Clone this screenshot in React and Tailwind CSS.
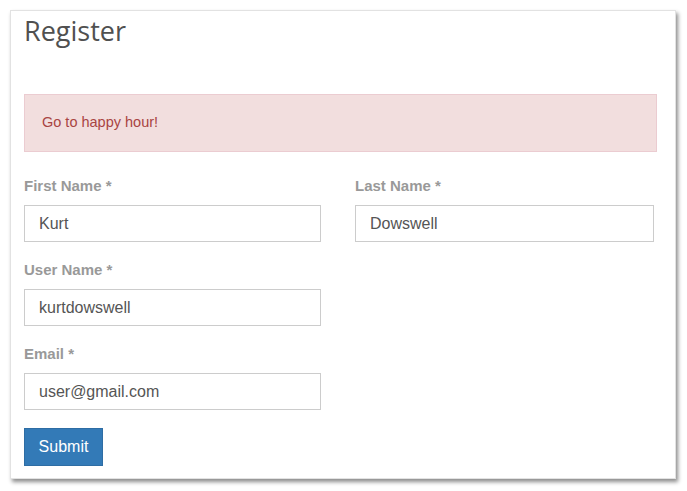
export default function App() {
  const label = "block h-5 text-[15px] leading-5 font-bold text-[#999] mb-[9px]";
  const input =
    "block w-full h-[37px] border border-[#ccc] bg-white px-[14px] text-[16px] text-[#555] outline-none";

  return (
    <div className="min-h-screen bg-white p-[10px] font-['Liberation_Sans',Arial,sans-serif]">
      <div className="w-[666px] h-[469px] bg-white border border-[#e2e2e2] shadow-[2px_3px_4px_rgba(0,0,0,0.45)] px-[13px]">
        <h1 className="mt-[1px] font-['Open_Sans',sans-serif] text-[27px] leading-[37px] text-[#505050] font-normal">
          Register
        </h1>

        <div className="mt-[45px] w-[633px] h-[58px] flex items-center bg-[#f2dede] border border-[#ebccd1] px-[17px] text-[14.5px] text-[#a94442]">
          Go to happy hour!
        </div>

        <form className="mt-[24px] grid grid-cols-[297px_299px] gap-x-[34px]">
          <div>
            <label className={label}>First Name *</label>
            <input className={input} defaultValue="Kurt" />
          </div>
          <div>
            <label className={label}>Last Name *</label>
            <input className={input} defaultValue="Dowswell" />
          </div>
          <div className="mt-[18px]">
            <label className={label}>User Name *</label>
            <input className={input} defaultValue="kurtdowswell" />
          </div>
          <div />
          <div className="mt-[18px]">
            <label className={label}>Email *</label>
            <input className={input} defaultValue="user@gmail.com" />
          </div>
          <div />
          <div className="mt-[18px]">
            <button
              type="button"
              className="w-[79px] h-[38px] bg-[#337ab7] border border-[#2e6da4] text-white text-[16px]"
            >
              Submit
            </button>
          </div>
        </form>
      </div>
    </div>
  );
}
